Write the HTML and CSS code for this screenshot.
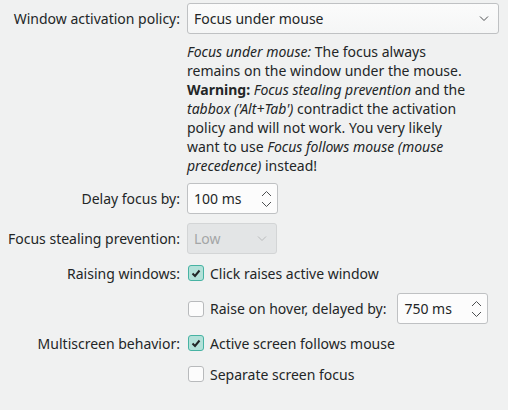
FILE: index.html
```html
<!DOCTYPE html>
<html>
<head>
<meta charset="utf-8">
<link rel="stylesheet" href="styles.css">
</head>
<body>
<div class="form">
  <div class="row r-policy">
    <label class="lbl">Window activation policy:</label>
    <div class="combo">
      <span>Focus under mouse</span>
      <svg class="chev" width="10" height="6" viewBox="0 0 10 6"><path d="M1 0.5 L5 4.5 L9 0.5" fill="none" stroke="#4d4f51" stroke-width="1"/></svg>
    </div>
  </div>
  <div class="row r-desc">
    <span class="lbl"></span>
    <p class="desc"><i>Focus under mouse:</i> The focus always<br>remains on the window under the mouse.<br><b>Warning:</b> <i>Focus stealing prevention</i> and the<br><i>tabbox ('Alt+Tab')</i> contradict the activation<br>policy and will not work. You very likely<br>want to use <i>Focus follows mouse (mouse<br>precedence)</i> instead!</p>
  </div>
  <div class="row r-delay">
    <label class="lbl">Delay focus by:</label>
    <div class="spin">
      <span>100 ms</span>
      <svg class="arrows" width="11" height="18" viewBox="0 0 11 18"><path d="M1 6 L5.5 1.5 L10 6 M1 12 L5.5 16.5 L10 12" fill="none" stroke="#4d4f51" stroke-width="1"/></svg>
    </div>
  </div>
  <div class="row r-steal">
    <label class="lbl">Focus stealing prevention:</label>
    <div class="combo disabled">
      <span>Low</span>
      <svg class="chev" width="10" height="6" viewBox="0 0 10 6"><path d="M1 0.5 L5 4.5 L9 0.5" fill="none" stroke="#b8babb" stroke-width="1"/></svg>
    </div>
  </div>
  <div class="row r-raise">
    <label class="lbl">Raising windows:</label>
    <div class="check">
      <span class="box on"><svg width="14" height="14" viewBox="0 0 14 14"><path d="M3.5 7.5 L6 10 L10.5 4.5" fill="none" stroke="#232627" stroke-width="2"/></svg></span>
      <span>Click raises active window</span>
    </div>
  </div>
  <div class="row r-hover">
    <span class="lbl"></span>
    <div class="check">
      <span class="box"></span>
      <span>Raise on hover, delayed by:</span>
      <div class="spin spin-hover">
        <span>750 ms</span>
        <svg class="arrows" width="11" height="18" viewBox="0 0 11 18"><path d="M1 6 L5.5 1.5 L10 6 M1 12 L5.5 16.5 L10 12" fill="none" stroke="#4d4f51" stroke-width="1"/></svg>
      </div>
    </div>
  </div>
  <div class="row r-multi">
    <label class="lbl">Multiscreen behavior:</label>
    <div class="check">
      <span class="box on"><svg width="14" height="14" viewBox="0 0 14 14"><path d="M3.5 7.5 L6 10 L10.5 4.5" fill="none" stroke="#232627" stroke-width="2"/></svg></span>
      <span>Active screen follows mouse</span>
    </div>
  </div>
  <div class="row r-sep">
    <span class="lbl"></span>
    <div class="check">
      <span class="box"></span>
      <span>Separate screen focus</span>
    </div>
  </div>
</div>
</body>
</html>
```

FILE: styles.css
```css
html, body {
  margin: 0;
  padding: 0;
  background: #f0f1f1;
}
body {
  font-family: "Noto Sans", "DejaVu Sans", sans-serif;
  font-size: 14px;
  color: #232627;
  line-height: 19px;
}
.form {
  display: flex;
  flex-direction: column;
  padding: 3px 8px 0 8px;
}
.row {
  display: grid;
  grid-template-columns: 172px 1fr;
  column-gap: 7px;
  align-items: center;
}
.lbl {
  text-align: right;
  white-space: nowrap;
}
.r-desc { margin-top: 8px; align-items: start; }
.r-delay { margin-top: 8px; }
.r-steal { margin-top: 9px; }
.r-raise { margin-top: 7px; height: 24px; }
.r-hover { margin-top: 8px; }
.r-multi { margin-top: 7px; height: 24px; }
.r-sep { margin-top: 7px; height: 24px; }

.combo {
  height: 31px;
  box-sizing: border-box;
  border: 1px solid #bfc1c3;
  border-radius: 3px;
  background: linear-gradient(#fbfbfb, #f5f6f6);
  display: flex;
  align-items: center;
  justify-content: space-between;
  padding: 0 9px 0 6px;
  margin-right: 1px;
}
.combo.disabled {
  width: 90px;
  background: #e3e5e6;
  border-color: #d3d5d6;
  color: #a4a6a7;
}
.desc {
  margin: 0;
  white-space: nowrap;
}
.desc b { font-weight: bold; }
.spin {
  width: 91px;
  height: 31px;
  box-sizing: border-box;
  border: 1px solid #bfc1c3;
  border-radius: 3px;
  background: #fcfcfc;
  display: flex;
  align-items: center;
  justify-content: space-between;
  padding: 0 5px 0 6px;
}
.arrows { display: block; }
.check {
  display: flex;
  align-items: center;
}
.box {
  width: 16px;
  height: 16px;
  box-sizing: border-box;
  border: 1px solid #b8babc;
  border-radius: 3px;
  background: #fcfcfc;
  margin-left: 1px;
  margin-right: 6px;
  display: flex;
  align-items: center;
  justify-content: center;
}
.box.on {
  background: #b3e1d9;
  border-color: #47b3a3;
}
.box svg { display: block; }
.spin-hover {
  margin-left: 11px;
}
```
